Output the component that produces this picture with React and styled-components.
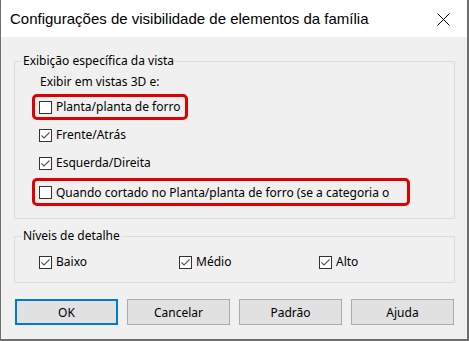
import React from 'react';
import styled, { createGlobalStyle } from 'styled-components';

const GlobalStyle = createGlobalStyle`
  html, body {
    margin: 0;
    padding: 0;
    background: #fff;
  }
  body {
    font-family: "Noto Sans", "Liberation Sans", Arial, sans-serif;
    font-size: 12px;
    color: #000;
  }
`;

const Window = styled.div`
  width: 469px;
  height: 341px;
  box-sizing: border-box;
  display: flex;
  flex-direction: column;
  border-left: 1px solid #6e6e6e;
  border-right: 2px solid #6e6e6e;
  border-bottom: 2px solid #6e6e6e;
  background: #f0f0f0;
`;

const TitleBar = styled.div`
  height: 37px;
  flex: none;
  background: #fff;
  display: flex;
  align-items: center;
  justify-content: space-between;
  padding: 0 17px 0 9px;
`;

const Title = styled.div`
  font-family: "Liberation Sans", Arial, sans-serif;
  font-size: 15px;
  color: #000;
  padding-bottom: 1px;
`;

const CloseButton = styled.div`
  width: 14px;
  height: 14px;
  display: flex;
  align-items: center;
  justify-content: center;
  padding-top: 2px;
`;

const Body = styled.div`
  flex: 1;
  padding: 16px 12px 0 13px;
  display: flex;
  flex-direction: column;
`;

const Group = styled.fieldset`
  margin: 0;
  padding: 0;
  border: 1px solid #dcdcdc;
  min-width: 0;
  height: ${p => p.$h}px;
  box-sizing: border-box;
  & + & {
    margin-top: ${p => p.$gap || 0}px;
  }
`;

const Legend = styled.legend`
  padding: 0 1px;
  margin-left: 7px;
  line-height: 16px;
`;

const Caption = styled.div`
  line-height: 16px;
  padding-left: 25px;
  margin-top: 5px;
`;

const Rows = styled.div`
  display: flex;
  flex-direction: column;
  gap: ${p => p.$gap}px;
  margin-top: 4px;
`;

const Row = styled.div`
  display: flex;
  align-items: center;
  gap: 4px;
  height: ${p => p.$h}px;
  box-sizing: border-box;
  margin-left: 17px;
  padding-left: 4px;
  border: 3px solid ${p => (p.$mark ? '#e00000' : 'transparent')};
  border-radius: 5px;
  width: ${p => p.$w}px;
  overflow: hidden;
`;

const Label = styled.span`
  white-space: nowrap;
  line-height: 16px;
`;

const Wrapped = styled.span`
  line-height: 16px;
  height: 20px;
  padding-top: 6px;
  overflow: hidden;
  width: 345px;
`;

const Box = styled.span`
  width: 13px;
  height: 13px;
  flex: none;
  box-sizing: border-box;
  border: 1px solid #333;
  background: #fff;
  display: flex;
  align-items: center;
  justify-content: center;
`;

const Levels = styled.div`
  display: grid;
  grid-template-columns: 140px 140px auto;
  padding-left: 24px;
  margin-top: 10px;
`;

const Level = styled.div`
  display: flex;
  align-items: center;
  gap: 4px;
`;

const Buttons = styled.div`
  display: grid;
  grid-template-columns: repeat(4, 103px);
  column-gap: 9px;
  margin-top: 16px;
  padding-left: 1px;
`;

const Button = styled.div`
  height: 26px;
  box-sizing: border-box;
  background: #e1e1e1;
  border: ${p => (p.$default ? '2px solid #0078d7' : '1px solid #adadad')};
  display: flex;
  align-items: center;
  justify-content: center;
`;

const Check = ({ on }) => (
  <Box>
    {on && (
      <svg width="11" height="11" viewBox="0 0 11 11">
        <path d="M1.5 5.5 L4 8 L9.5 2.5" fill="none" stroke="#555" strokeWidth="1.1" />
      </svg>
    )}
  </Box>
);

const App = () => (
  <>
    <GlobalStyle />
    <Window>
      <TitleBar>
        <Title>Configurações de visibilidade de elementos da família</Title>
        <CloseButton>
          <svg width="13" height="13" viewBox="0 0 13 13">
            <path d="M0.5 0.5 L12.5 12.5 M12.5 0.5 L0.5 12.5" stroke="#000" strokeWidth="1" />
          </svg>
        </CloseButton>
      </TitleBar>
      <Body>
        <Group $h={166}>
          <Legend>Exibição específica da vista</Legend>
          <Caption>Exibir em vistas 3D e:</Caption>
          <Rows $gap={2}>
            <Row $mark $h={26} $w={156}>
              <Check />
              <Label>Planta/planta de forro</Label>
            </Row>
            <Row $h={26} $w={156}>
              <Check on />
              <Label>Frente/Atrás</Label>
            </Row>
            <Row $h={26} $w={156}>
              <Check on />
              <Label>Esquerda/Direita</Label>
            </Row>
            <Row $mark $h={28} $w={378}>
              <Check />
              <Wrapped>Quando cortado no Planta/planta de forro (se a categoria o permitir)</Wrapped>
            </Row>
          </Rows>
        </Group>
        <Group $h={55} $gap={9}>
          <Legend>Níveis de detalhe</Legend>
          <Levels>
            <Level>
              <Check on />
              <Label>Baixo</Label>
            </Level>
            <Level>
              <Check on />
              <Label>Médio</Label>
            </Level>
            <Level>
              <Check on />
              <Label>Alto</Label>
            </Level>
          </Levels>
        </Group>
        <Buttons>
          <Button $default>OK</Button>
          <Button>Cancelar</Button>
          <Button>Padrão</Button>
          <Button>Ajuda</Button>
        </Buttons>
      </Body>
    </Window>
  </>
);

export default App;
